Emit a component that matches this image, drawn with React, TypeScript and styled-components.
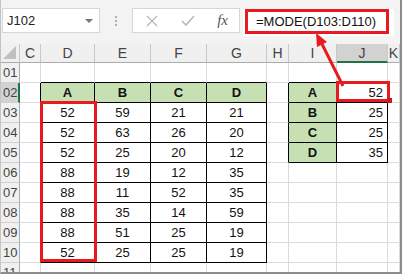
import * as React from 'react';
import styled, { createGlobalStyle } from 'styled-components';

const RED = '#e8191f';
const GRID = '#dadada';
const INK = '#000';
const GREEN_FILL = '#c6e0b4';

const Global = createGlobalStyle`
  html, body {
    margin: 0;
    padding: 0;
    background: #fff;
  }
  body {
    font-family: "Liberation Sans", Arial, sans-serif;
  }
`;

const Frame = styled.div`
  position: relative;
  width: 402px;
  height: 274px;
  box-sizing: border-box;
  border-left: 1px solid #c4c4c4;
  border-right: 2px solid #8c8c8c;
  border-bottom: 2px solid #8c8c8c;
  overflow: hidden;
  background: #fff;
`;

const FormulaBar = styled.div`
  display: flex;
  align-items: flex-start;
  height: 44px;
  box-sizing: border-box;
  padding: 8px 0 0 1px;
  background: #f3f3f3;
`;

const NameBox = styled.div`
  position: relative;
  display: flex;
  align-items: center;
  width: 98px;
  height: 25px;
  box-sizing: border-box;
  padding-left: 4px;
  background: #fff;
  border: 1px solid #d6d6d6;
  font-size: 13px;
  color: #222;
`;

const DropArrow = styled.span`
  position: absolute;
  right: 6px;
  top: 10px;
  width: 0;
  height: 0;
  border-left: 4px solid transparent;
  border-right: 4px solid transparent;
  border-top: 4px solid #777;
`;

const Grip = styled.div`
  display: flex;
  flex-direction: column;
  align-items: center;
  gap: 2px;
  width: 32px;
  padding-top: 8px;
`;

const GripDot = styled.span`
  width: 2px;
  height: 2px;
  background: #b0b0b0;
`;

const FxButtons = styled.div`
  display: flex;
  align-items: center;
  justify-content: space-between;
  width: 108px;
  height: 25px;
  box-sizing: border-box;
  padding: 0 11px 0 13px;
  background: #fff;
  border: 1px solid #d6d6d6;
`;

const FxLabel = styled.span`
  font-family: "Liberation Serif", "Times New Roman", serif;
  font-style: italic;
  font-size: 15px;
  color: #555;
`;

const FormulaInput = styled.div`
  flex: 1;
  height: 27px;
  margin: 1px 6px 0 3px;
  box-sizing: border-box;
  padding: 0 4px 0 2px;
  background: #fff;
`;

const FormulaText = styled.div`
  display: flex;
  align-items: center;
  width: 144px;
  height: 25px;
  box-sizing: border-box;
  padding-left: 8px;
  border: 3px solid ${RED};
  font-size: 13px;
  color: #111;
  white-space: nowrap;
`;

const Sheet = styled.div`
  display: grid;
  grid-template-columns: 19px 21px 54px 56px 56px 60px 22px 48px 51px 1fr;
  grid-template-rows: 19px;
  grid-auto-rows: 20px;
`;

const Corner = styled.div`
  position: relative;
  background: #f0f0f0;
  border-right: 1px solid #c8c8c8;
  border-bottom: 1px solid #ababab;
  &::after {
    content: '';
    position: absolute;
    right: 3px;
    bottom: 3px;
    width: 0;
    height: 0;
    border-left: 13px solid transparent;
    border-bottom: 13px solid #c0c0c0;
  }
`;

const ColHead = styled.div<{ $active?: boolean }>`
  display: flex;
  align-items: center;
  justify-content: center;
  box-sizing: border-box;
  background: ${p => (p.$active ? '#d2d2d2' : '#f0f0f0')};
  border-right: 1px solid #c8c8c8;
  border-bottom: ${p => (p.$active ? '2px solid #217346' : '1px solid #ababab')};
  font-size: 14px;
  color: #444;
  overflow: hidden;
  white-space: nowrap;
`;

const RowHead = styled.div<{ $active?: boolean }>`
  display: flex;
  align-items: center;
  box-sizing: border-box;
  padding-left: 2px;
  background: ${p => (p.$active ? '#d2d2d2' : '#f0f0f0')};
  border-right: ${p => (p.$active ? '2px solid #217346' : '1px solid #ababab')};
  border-bottom: 1px solid #d0d0d0;
  font-size: 13px;
  color: #444;
`;

const Cell = styled.div<{
  $br: string;
  $bb: string;
  $fill?: string;
  $bold?: boolean;
  $align?: 'center' | 'flex-end';
}>`
  position: relative;
  display: flex;
  align-items: center;
  justify-content: ${p => p.$align || 'center'};
  box-sizing: border-box;
  padding-right: ${p => (p.$align === 'flex-end' ? '4px' : '0')};
  background: ${p => p.$fill || '#fff'};
  border-right: 1px solid ${p => p.$br};
  border-bottom: 1px solid ${p => p.$bb};
  font-size: 13px;
  font-weight: ${p => (p.$bold ? 700 : 400)};
  color: #111;
`;

// red annotation boxes drawn over the cells
const Highlight = styled.div<{ $rows: number }>`
  position: absolute;
  z-index: 2;
  left: -1px;
  top: -2px;
  right: -3px;
  height: ${p => p.$rows * 20 + 1}px;
  border: 3px solid ${RED};
  box-sizing: border-box;
  pointer-events: none;
`;

const Handle = styled.span`
  position: absolute;
  right: -5px;
  bottom: -4px;
  width: 5px;
  height: 5px;
  background: #c81c1c;
`;

const Arrow = styled.svg`
  position: absolute;
  left: 0;
  top: 0;
  z-index: 3;
  pointer-events: none;
`;

const COLS = ['C', 'D', 'E', 'F', 'G', 'H', 'I', 'J', 'K'];

const values: number[][] = [
  [52, 59, 21, 21],
  [52, 63, 26, 20],
  [52, 25, 20, 12],
  [88, 19, 12, 35],
  [88, 11, 52, 35],
  [88, 35, 14, 59],
  [88, 51, 25, 19],
  [52, 25, 25, 19]
];
const modes = [52, 25, 25, 35];
const labels = ['A', 'B', 'C', 'D'];

// col index: 0=C, 1=D ... 6=I, 7=J, 8=K ; row: 1..11
const inTable = (r: number, c: number) =>
  (r >= 2 && r <= 10 && c >= 1 && c <= 4) ||
  (r >= 2 && r <= 5 && c >= 6 && c <= 7);

const cellContent = (r: number, c: number) => {
  if (r === 2 && c >= 1 && c <= 4) return { text: labels[c - 1], green: true };
  if (r >= 3 && r <= 10 && c >= 1 && c <= 4)
    return { text: String(values[r - 3][c - 1]) };
  if (r >= 2 && r <= 5 && c === 6) return { text: labels[r - 2], green: true };
  if (r >= 2 && r <= 5 && c === 7)
    return { text: String(modes[r - 2]), right: true };
  return null;
};

const CrossIcon = () => (
  <svg width='12' height='12' viewBox='0 0 12 12'>
    <path d='M1 1 L11 11 M11 1 L1 11' stroke='#b8b8b8' strokeWidth='1.4' />
  </svg>
);

const CheckIcon = () => (
  <svg width='14' height='12' viewBox='0 0 14 12'>
    <path d='M1 6 L5 10 L13 1' stroke='#b8b8b8' strokeWidth='1.6' fill='none' />
  </svg>
);

const App: React.FC = () => {
  const rows = Array.from({ length: 11 }, (_, i) => i + 1);

  return (
    <>
      <Global />
      <Frame>
        <FormulaBar>
          <NameBox>
            J102
            <DropArrow />
          </NameBox>
          <Grip>
            <GripDot />
            <GripDot />
            <GripDot />
          </Grip>
          <FxButtons>
            <CrossIcon />
            <CheckIcon />
            <FxLabel>fx</FxLabel>
          </FxButtons>
          <FormulaInput>
            <FormulaText>=MODE(D103:D110)</FormulaText>
          </FormulaInput>
        </FormulaBar>

        <Sheet>
          <Corner />
          {COLS.map(col => (
            <ColHead key={col} $active={col === 'J'}>
              {col}
            </ColHead>
          ))}
          {rows.map(r => (
            <React.Fragment key={r}>
              <RowHead $active={r === 2}>{String(r).padStart(2, '0')}</RowHead>
              {COLS.map((col, c) => {
                const content = cellContent(r, c);
                const br = inTable(r, c) || inTable(r, c + 1) ? INK : GRID;
                const bb = inTable(r, c) || inTable(r + 1, c) ? INK : GRID;
                return (
                  <Cell
                    key={col}
                    $br={br}
                    $bb={bb}
                    $fill={content && content.green ? GREEN_FILL : undefined}
                    $bold={!!(content && content.green)}
                    $align={content && content.right ? 'flex-end' : 'center'}
                  >
                    {content && content.text}
                    {r === 3 && c === 1 && <Highlight $rows={8} />}
                    {r === 2 && c === 7 && (
                      <Highlight $rows={1}>
                        <Handle />
                      </Highlight>
                    )}
                  </Cell>
                );
              })}
            </React.Fragment>
          ))}
        </Sheet>

        <Arrow width='402' height='274' viewBox='0 0 402 274'>
          <line x1='342' y1='86' x2='321' y2='44' stroke={RED} strokeWidth='3' />
          <polygon points='315,33 326,42 316,47' fill={RED} />
        </Arrow>
      </Frame>
    </>
  );
};

export default App;
